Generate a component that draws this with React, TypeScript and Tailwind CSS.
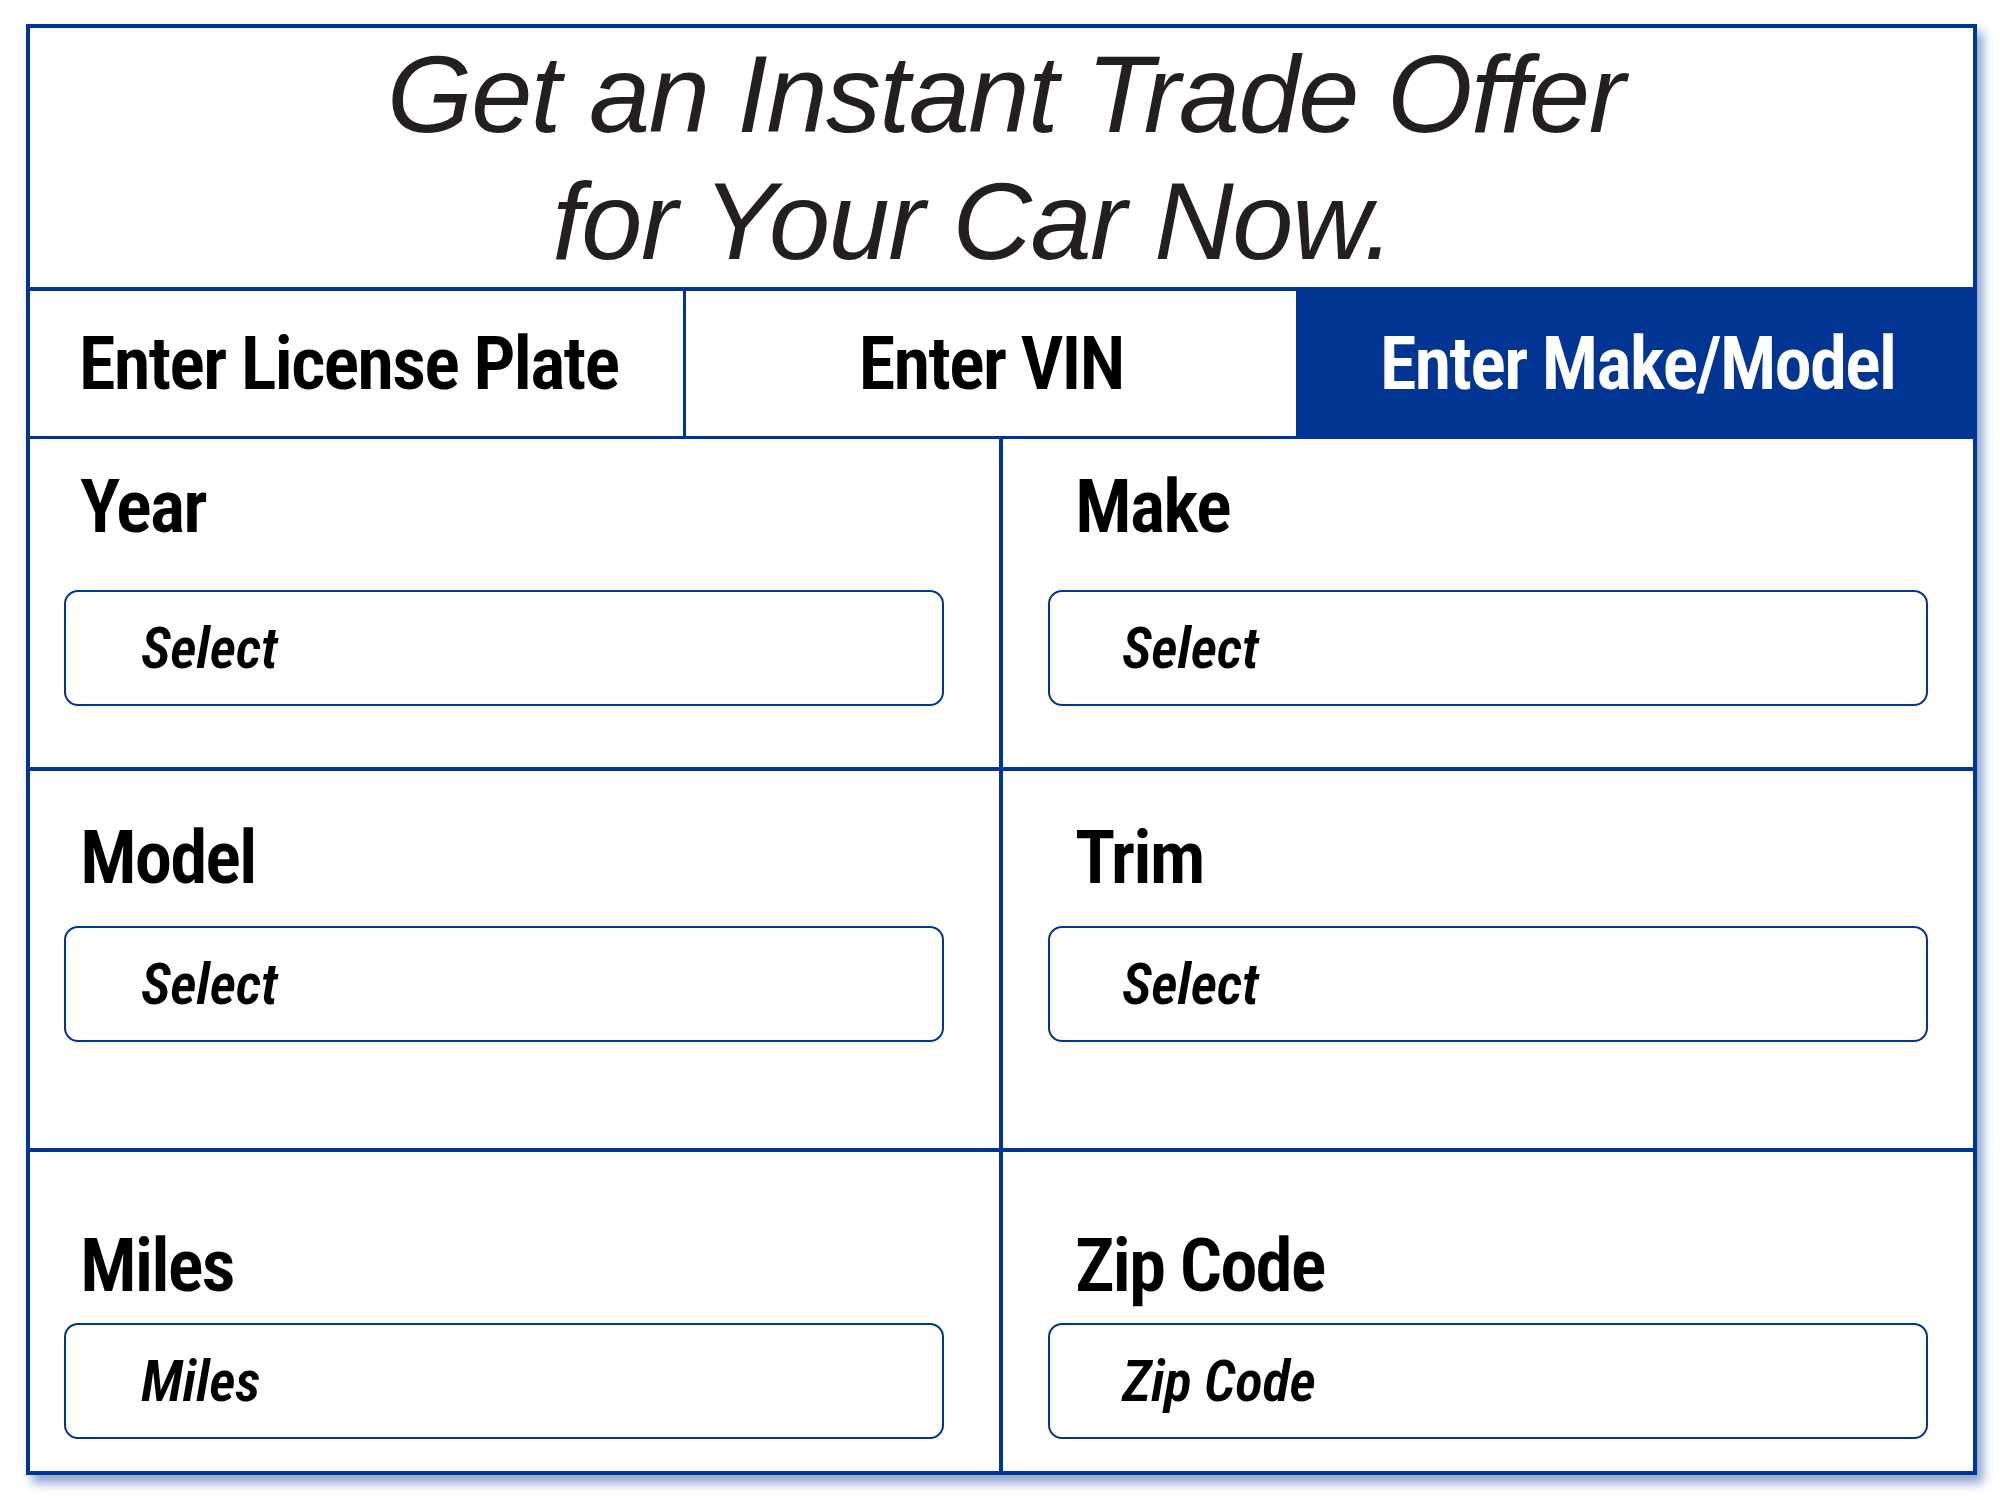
import React from "react";

const cond = "font-['Roboto_Condensed','Open_Sans',sans-serif]";

function Label({ label, side }: { label: string; side: "left" | "right" }) {
  const labelMl = side === "left" ? "ml-[16px]" : "ml-[27px]";
  return (
    <div className={`${labelMl} ${cond} text-[75px] leading-none font-semibold tracking-[-2px] text-black`}>
      {label}
    </div>
  );
}

function Input({ placeholder, side }: { placeholder: string; side: "left" | "right" }) {
  const textPl = side === "left" ? "pl-[75px]" : "pl-[72px]";
  return (
    <div
      className={`w-[880px] h-[116px] border-2 border-[#003594] rounded-[14px] flex items-center ${textPl} ${cond} text-[57px] leading-none font-semibold italic text-black tracking-[-0.3px]`}
    >
      {placeholder}
    </div>
  );
}

function Row({
  left,
  right,
  rowClass,
  pt,
  gap,
}: {
  left: [string, string];
  right: [string, string];
  rowClass: string;
  pt: string;
  gap: string;
}) {
  return (
    <div className={`flex ${rowClass}`}>
      <div className={`w-[973px] border-r-4 border-[#003594] pl-[34px] ${pt} flex flex-col`}>
        <Label label={left[0]} side="left" />
        <div className={gap}>
          <Input placeholder={left[1]} side="left" />
        </div>
      </div>
      <div className={`flex-1 pl-[45px] ${pt} flex flex-col`}>
        <Label label={right[0]} side="right" />
        <div className={gap}>
          <Input placeholder={right[1]} side="right" />
        </div>
      </div>
    </div>
  );
}

export default function App() {
  return (
    <div className="w-[2000px] h-[1500px] bg-white pt-[24px] pl-[26px]">
      <div className="w-[1951px] h-[1451px] border-4 border-[#003594] bg-white flex flex-col shadow-[6px_8px_10px_rgba(0,53,148,0.45)]">
        {/* Title */}
        <div className="h-[263px] border-b-4 border-[#003594] pt-[2px] text-center font-['Liberation_Sans',Arial,sans-serif] italic text-[110px] leading-[127px] tracking-[-1.5px] text-[#231f20]">
          <div className="pl-[8px]">Get an Instant Trade Offer</div>
          <div className="pr-[58px]">for Your Car Now.</div>
        </div>

        {/* Tabs */}
        <div className={`h-[148px] border-b-[3px] border-[#003594] flex ${cond} text-[75px] leading-none font-semibold tracking-[-2px]`}>
          <div className="w-[656px] border-r-[3px] border-[#003594] flex items-center justify-center text-black pr-[16px]">
            Enter License Plate
          </div>
          <div className="w-[612px] border-r-2 border-[#003594] flex items-center justify-center text-black">
            Enter VIN
          </div>
          <div className="flex-1 bg-[#003594] flex items-center justify-center text-white pl-[4px]">
            Enter Make/Model
          </div>
        </div>

        {/* Rows */}
        <Row
          left={["Year", "Select"]}
          right={["Make", "Select"]}
          rowClass="h-[332px] border-b-4 border-[#003594]"
          pt="pt-[30px]"
          gap="mt-[46px]"
        />
        <Row
          left={["Model", "Select"]}
          right={["Trim", "Select"]}
          rowClass="h-[381px] border-b-4 border-[#003594]"
          pt="pt-[49px]"
          gap="mt-[31px]"
        />
        <Row
          left={["Miles", "Miles"]}
          right={["Zip Code", "Zip Code"]}
          rowClass="flex-1"
          pt="pt-[76px]"
          gap="mt-[20px]"
        />
      </div>
    </div>
  );
}
